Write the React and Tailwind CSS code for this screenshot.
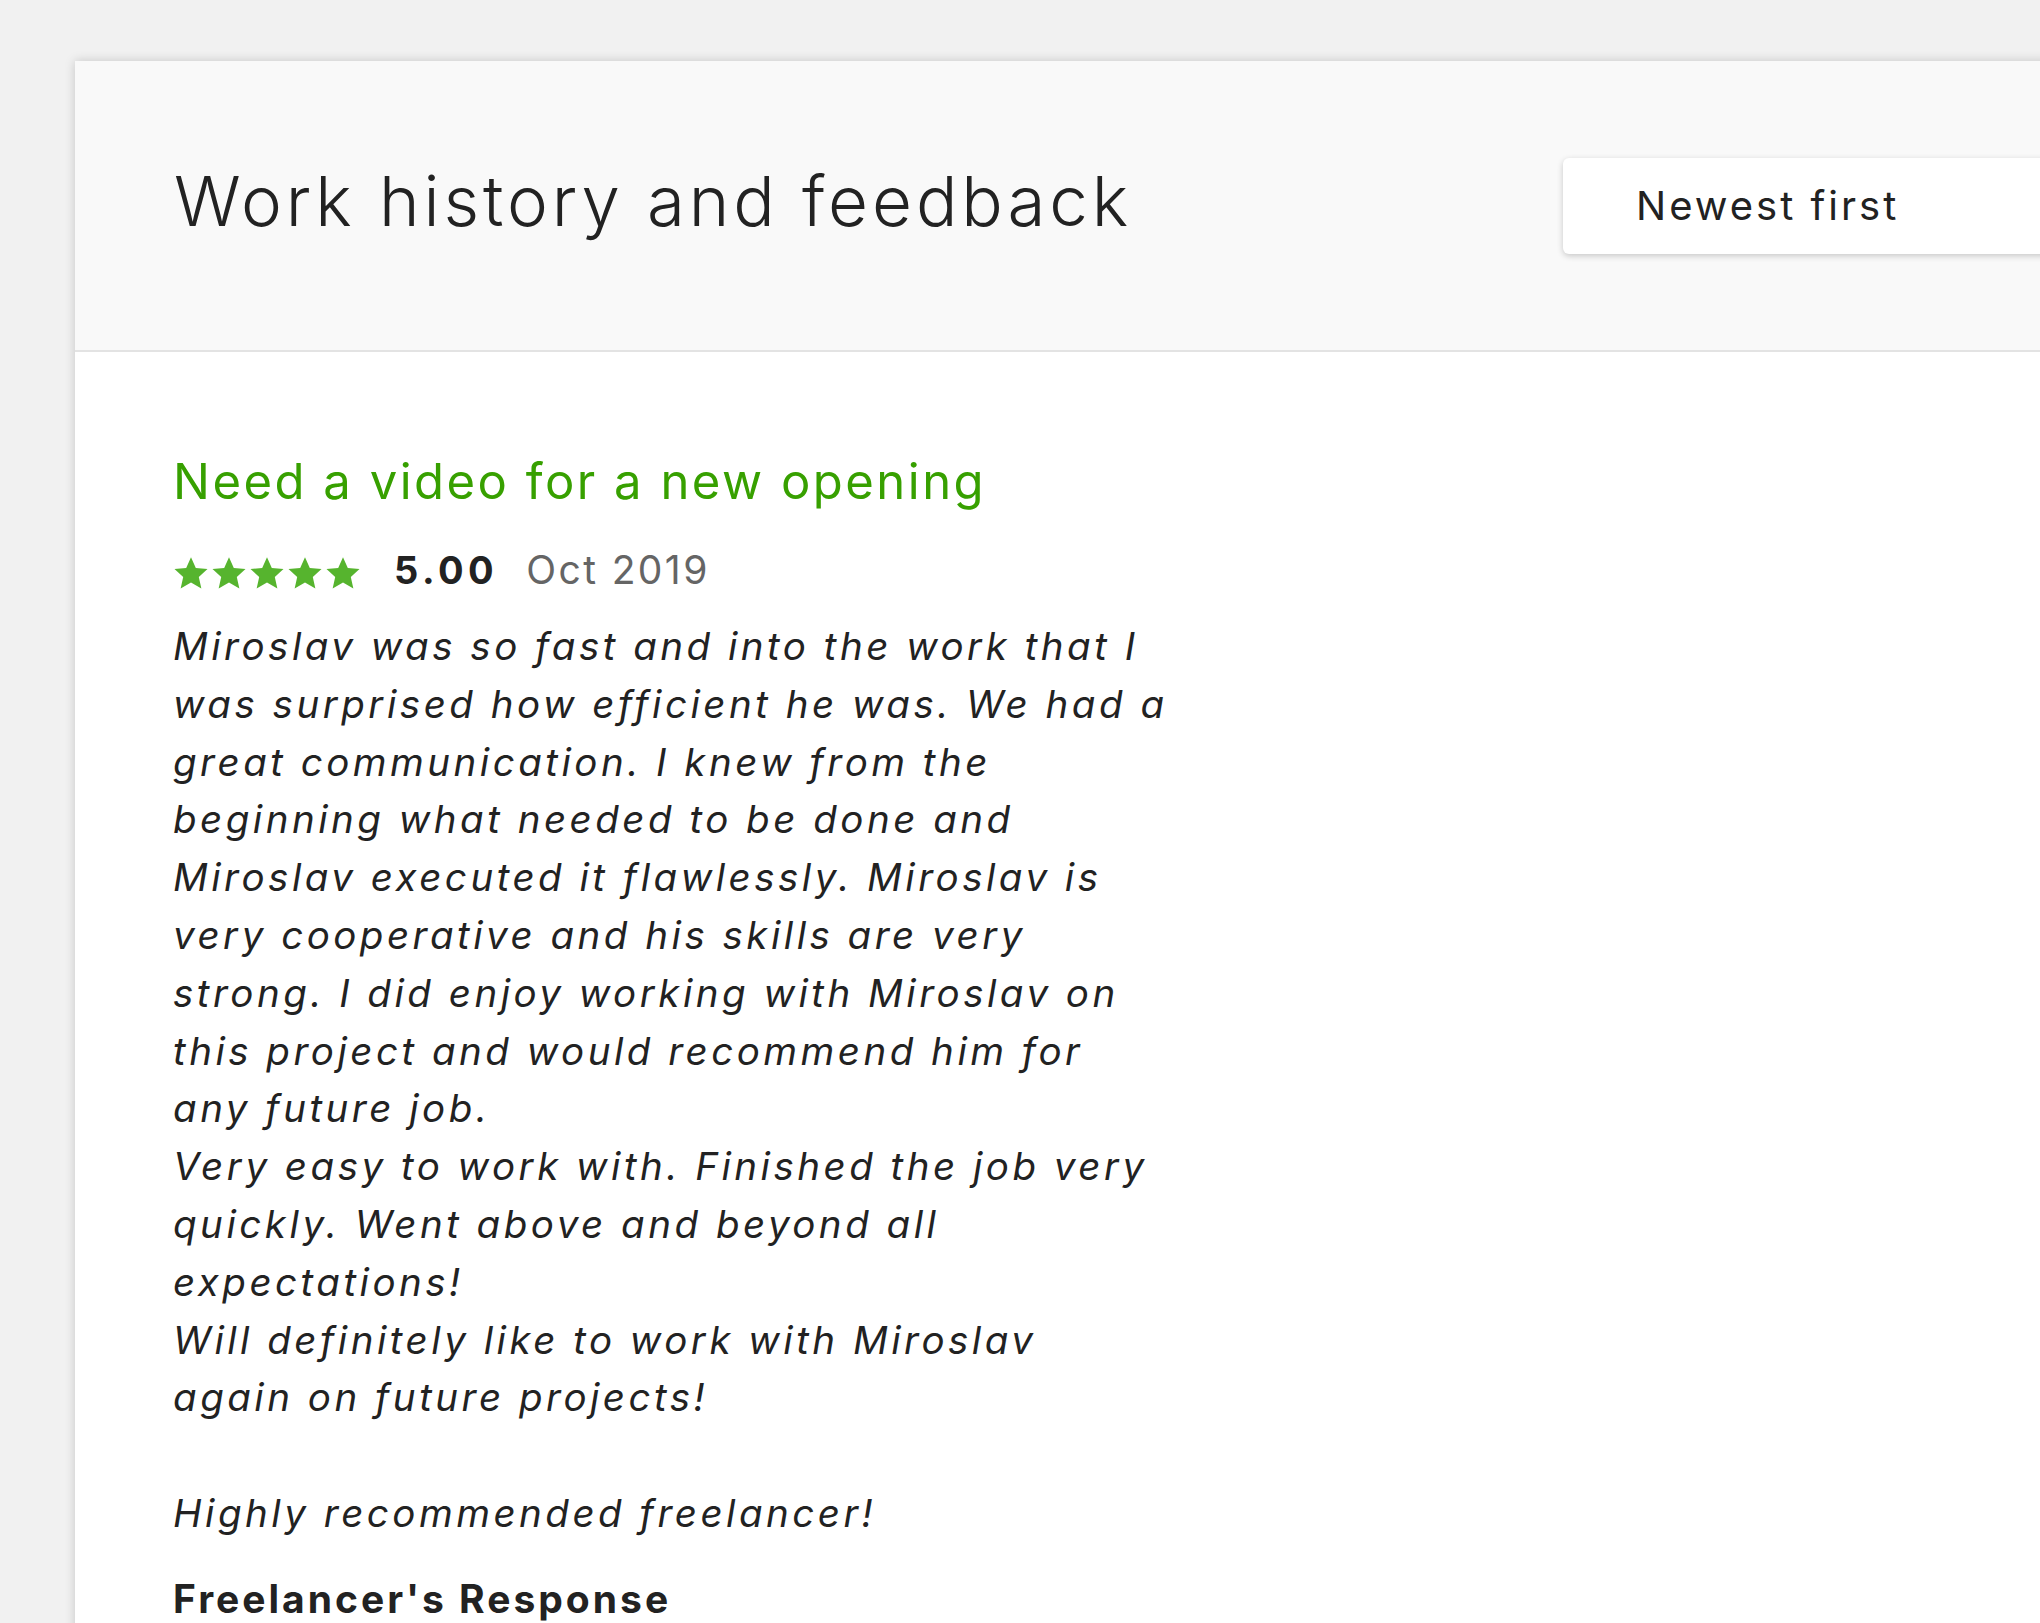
const feedback = `Miroslav was so fast and into the work that I
was surprised how efficient he was. We had a
great communication. I knew from the
beginning what needed to be done and
Miroslav executed it flawlessly. Miroslav is
very cooperative and his skills are very
strong. I did enjoy working with Miroslav on
this project and would recommend him for
any future job.
Very easy to work with. Finished the job very
quickly. Went above and beyond all
expectations!
Will definitely like to work with Miroslav
again on future projects!

Highly recommended freelancer!`;

const Star = () => (
  <svg viewBox="0 0 24 24" className="w-[36px] h-[36px] mr-[2px]">
    <path
      d="M12 1.5l3.2 7.1 7.8.8-5.8 5.2 1.7 7.7L12 18.4l-6.9 3.9 1.7-7.7L1 9.4l7.8-.8z"
      fill="#56b42e"
    />
  </svg>
);

const App = () => {
  return (
    <div className="min-h-screen bg-[#f1f1f1] pt-[61px] pl-[75px] overflow-hidden font-['Inter',sans-serif] text-[#222]">
      {/* Card */}
      <div className="w-[2025px] bg-white shadow-[0_0_10px_rgba(0,0,0,0.18)] min-h-[1600px]">
        {/* Header */}
        <div className="h-[291px] bg-[#f9f9f9] border-b-2 border-[#e3e3e3] flex items-center pl-[99px] pr-[37px]">
          <h2 className="mb-[8px] text-[69px] leading-none font-light tracking-[3.9px]">Work history and feedback</h2>
          <div className="ml-auto w-[500px] h-[96px] bg-white rounded-[6px] shadow-[0_2px_6px_rgba(0,0,0,0.2)] flex items-center pl-[73px]">
            <span className="text-[40px] tracking-[3px]">Newest first</span>
          </div>
        </div>

        {/* Feedback item */}
        <div className="pl-[98px] pt-[100px]">
          <h3 className="text-[49px] leading-[60px] text-[#37a000] tracking-[2.5px]">Need a video for a new opening</h3>
          <div className="flex items-center mt-[29px] h-[58px]">
            <div className="flex pt-[6px]">
              <Star />
              <Star />
              <Star />
              <Star />
              <Star />
            </div>
            <span className="ml-[31px] text-[38px] font-bold tracking-[4.5px]">5.00</span>
            <span className="ml-[28px] text-[39px] text-[#656565] tracking-[2.4px]">Oct 2019</span>
          </div>
          <p className="mt-[19px] text-[38.5px] leading-[57.8px] italic tracking-[3.5px] whitespace-pre-line">{feedback}</p>
          <h4 className="mt-[27px] text-[39px] leading-[58px] font-bold tracking-[3px]">Freelancer's Response</h4>
        </div>
      </div>
    </div>
  );
};

export default App;
